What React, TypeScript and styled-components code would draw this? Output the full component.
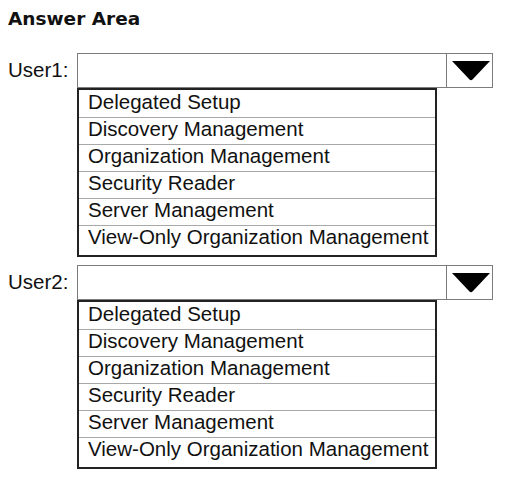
import styled, { createGlobalStyle } from "styled-components";

const GlobalStyle = createGlobalStyle`
  html, body {
    margin: 0;
    padding: 0;
    background: #ffffff;
  }
`;

const roles = [
  "Delegated Setup",
  "Discovery Management",
  "Organization Management",
  "Security Reader",
  "Server Management",
  "View-Only Organization Management",
];

const users = ["User1", "User2"];

function ArrowIcon() {
  return (
    <svg width="38" height="20" viewBox="0 0 38 20">
      <path d="M0 0 L38 0 L20.5 18.6 Q19 20 17.5 18.6 Z" fill="#000" />
    </svg>
  );
}

function UserChoice({ name }: { name: string }) {
  return (
    <Block>
      <Label>{name}:</Label>
      <SelectBox>
        <SelectValue />
        <ArrowCell>
          <ArrowIcon />
        </ArrowCell>
      </SelectBox>
      <OptionList>
        {roles.map((role) => (
          <OptionRow key={role}>{role}</OptionRow>
        ))}
      </OptionList>
    </Block>
  );
}

export default function App() {
  return (
    <>
      <GlobalStyle />
      <Page>
        <Title>Answer Area</Title>
        <Blocks>
          {users.map((u) => (
            <UserChoice key={u} name={u} />
          ))}
        </Blocks>
      </Page>
    </>
  );
}

const Page = styled.div`
  padding: 8px 0 0 8px;
  width: 514px;
  height: 477px;
  box-sizing: border-box;
  font-family: "Liberation Sans", Arial, sans-serif;
  color: #111;
`;

const Title = styled.h1`
  margin: 0;
  font-family: "DejaVu Sans", Verdana, sans-serif;
  font-weight: bold;
  font-size: 18.5px;
  line-height: 22px;
  color: #111;
`;

const Blocks = styled.div`
  margin-top: 23px;
  display: flex;
  flex-direction: column;
  gap: 8px;
`;

const Block = styled.div`
  display: grid;
  grid-template-columns: 69px auto;
  grid-template-rows: 35px auto;
  align-items: center;
`;

const Label = styled.div`
  font-size: 20.5px;
  padding-bottom: 2px;
`;

const SelectBox = styled.div`
  box-sizing: border-box;
  width: 416px;
  height: 35px;
  border: 1px solid #7c7c7c;
  display: flex;
  background: #fff;
`;

const SelectValue = styled.div`
  flex: 1;
`;

const ArrowCell = styled.div`
  width: 46px;
  border-left: 1px solid #7c7c7c;
  display: flex;
  align-items: center;
  justify-content: center;
  padding-left: 2px;
  box-sizing: border-box;
`;

const OptionList = styled.div`
  grid-column: 2;
  box-sizing: border-box;
  width: 360px;
  border: 2px solid #222;
  padding: 1px 0 3px;
  align-self: start;
`;

const OptionRow = styled.div`
  height: 26px;
  box-sizing: content-box;
  padding-left: 9px;
  font-size: 20.5px;
  line-height: 22px;
  white-space: nowrap;

  & + & {
    border-top: 1px solid #a8a8a8;
  }
`;
